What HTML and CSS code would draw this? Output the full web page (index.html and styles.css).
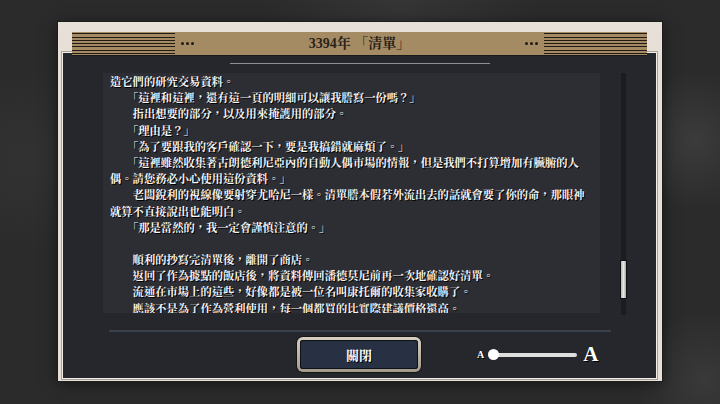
FILE: index.html
```html
<!DOCTYPE html>
<html lang="zh-Hant">
<head>
<meta charset="utf-8">
<title>3394年 「清單」</title>
<link rel="stylesheet" href="styles.css">
</head>
<body>
<div class="frame">
  <div class="header">
    <div class="stripes"></div>
    <div class="dots"><i></i><i></i><i></i></div>
    <div class="title">3394年 「清單」</div>
    <div class="dots"><i></i><i></i><i></i></div>
    <div class="stripes"></div>
  </div>
  <div class="panel">
    <div class="topline"></div>
    <div class="content">
      <div class="textbox">
        <p class="ln">造它們的研究交易資料。</p>
        <p class="ln">　　「這裡和這裡，還有這一頁的明細可以讓我謄寫一份嗎？」</p>
        <p class="ln">　　指出想要的部分，以及用來掩護用的部分。</p>
        <p class="ln">　　「理由是？」</p>
        <p class="ln">　　「為了要跟我的客戶確認一下，要是我搞錯就麻煩了。」</p>
        <p class="ln">　　「這裡雖然收集著古朗德利尼亞內的自動人偶市場的情報，但是我們不打算增加有臟腑的人</p>
        <p class="ln">偶。請您務必小心使用這份資料。」</p>
        <p class="ln">　　老闆銳利的視線像要射穿尤哈尼一樣。清單謄本假若外流出去的話就會要了你的命，那眼神</p>
        <p class="ln">就算不直接說出也能明白。</p>
        <p class="ln">　　「那是當然的，我一定會謹慎注意的。」</p>
        <p class="ln"></p>
        <p class="ln">　　順利的抄寫完清單後，離開了商店。</p>
        <p class="ln">　　返回了作為據點的飯店後，將資料傳回潘德莫尼前再一次地確認好清單。</p>
        <p class="ln">　　流通在市場上的這些，好像都是被一位名叫康托爾的收集家收購了。</p>
        <p class="ln">　　應該不是為了作為營利使用，每一個都買的比實際建議價格還高。</p>
      </div>
      <div class="scroll"><div class="thumb"></div></div>
    </div>
    <div class="divider"></div>
    <div class="controls">
      <div class="btn"><div class="btn-inner">關閉</div></div>
      <div class="fontsize">
        <span class="a-small">A</span>
        <div class="slider"><div class="track"></div><div class="knob"></div></div>
        <span class="a-big">A</span>
      </div>
    </div>
  </div>
</div>
</body>
</html>
```
FILE: styles.css
```css
html, body {
  margin: 0;
  padding: 0;
}
body {
  width: 720px;
  height: 404px;
  overflow: hidden;
  background:
    radial-gradient(circle at 695px 140px, #3b3b3b 0, rgba(59,59,59,0) 70px),
    radial-gradient(circle at 705px 380px, #393939 0, rgba(57,57,57,0) 70px),
    radial-gradient(circle at 400px 0px, #353535 0, rgba(53,53,53,0) 140px),
    radial-gradient(circle at 20px 160px, #323232 0, rgba(50,50,50,0) 90px),
    #2b2b2b;
  font-family: "Noto Serif CJK TC", "Noto Sans CJK TC", serif;
}
.frame {
  margin: 22px 0 0 58px;
  width: 604px;
  height: 359px;
  box-sizing: border-box;
  padding: 10px 6px 3px 5px;
  background: #e6e0d9;
  display: flex;
  flex-direction: column;
  box-shadow: 0 0 0 1px #1d1d1d, 0 2px 14px rgba(0,0,0,0.55);
}
.header {
  position: relative;
  z-index: 1;
  height: 23px;
  margin: 0 9px -2px 9px;
  background: #a58b63;
  display: flex;
  align-items: center;
  box-shadow: 0 1px 0 rgba(0,0,0,0.35);
}
.stripes {
  width: 103px;
  height: 100%;
  background: repeating-linear-gradient(to bottom,
    #a58b63 0, #a58b63 1.2px,
    #221b13 1.2px, #221b13 2.3px,
    #a58b63 2.3px, #a58b63 3.3px);
}
.dots {
  display: flex;
  gap: 2px;
  margin: 0 6px;
}
.dots i {
  display: block;
  width: 3px;
  height: 3px;
  border-radius: 50%;
  background: #1f1a14;
}
.title {
  flex: 1;
  text-align: center;
  font-family: "Liberation Serif", "Noto Serif CJK TC", "Noto Sans CJK TC", serif;
  font-size: 14px;
  font-weight: 700;
  color: #2a2219;
  line-height: 23px;
}
.panel {
  flex: 1;
  background: #26272c;
  display: flex;
  flex-direction: column;
  box-shadow: 0 0 0 1px #f2ede7, 0 0 0 2px #a8a198;
}
.topline {
  width: 260px;
  height: 1px;
  margin: 10px auto 0;
  background: #8f8f92;
}
.content {
  display: flex;
  margin: 9px 0 0 40px;
  height: 242px;
}
.textbox {
  width: 497px;
  height: 240px;
  box-sizing: border-box;
  padding-left: 7px;
  background: #2d2e34;
  overflow: hidden;
  font-size: 11.3px;
  line-height: 16.2px;
  font-weight: 700;
  color: #f6f6f6;
  text-shadow: 1px 1px 0 #000;
}
.ln {
  margin: 0;
  height: 16.2px;
  white-space: nowrap;
}
.scroll {
  width: 5px;
  height: 242px;
  margin-left: 21px;
  background: #1b1c20;
}
.thumb {
  margin-top: 188px;
  height: 37px;
  background: linear-gradient(to right, #b5b5b5, #e6e6e6 50%, #a6a6a6);
  box-shadow: 0 0 0 1px #101010;
}
.divider {
  margin: 15px 0 0 46px;
  width: 502px;
  height: 2px;
  background: #3b414b;
}
.controls {
  display: flex;
  align-items: center;
  height: 35px;
  margin: 5px 0 0 234px;
}
.btn {
  width: 124px;
  height: 35px;
  box-sizing: border-box;
  padding: 3px;
  border-radius: 6px;
  background: linear-gradient(#d8d1c2, #a29b8b);
  box-shadow: 0 0 0 1px #15161a;
}
.btn-inner {
  height: 100%;
  border-radius: 3px;
  background: #283043;
  box-shadow: inset 0 0 0 1px #0f1117;
  display: flex;
  align-items: center;
  justify-content: center;
  color: #ffffff;
  font-size: 13px;
  font-weight: 700;
  text-shadow: 1px 1px 0 #000;
}
.fontsize {
  display: flex;
  align-items: center;
  margin-left: 56px;
}
.a-small {
  font-family: "Liberation Serif", serif;
  font-weight: 700;
  font-size: 10px;
  color: #fff;
  text-shadow: 1px 1px 0 #000;
}
.slider {
  position: relative;
  width: 89px;
  height: 11px;
  margin-left: 4px;
  display: flex;
  align-items: center;
}
.track {
  margin-left: 5px;
  width: 84px;
  height: 4px;
  border-radius: 2px;
  background: #dedede;
}
.knob {
  position: absolute;
  left: 0;
  top: 0;
  width: 11px;
  height: 11px;
  border-radius: 50%;
  background: #ffffff;
}
.a-big {
  font-family: "Liberation Serif", serif;
  font-weight: 700;
  font-size: 21px;
  color: #fff;
  margin-left: 6px;
  text-shadow: 1px 1px 0 #000;
}
```
